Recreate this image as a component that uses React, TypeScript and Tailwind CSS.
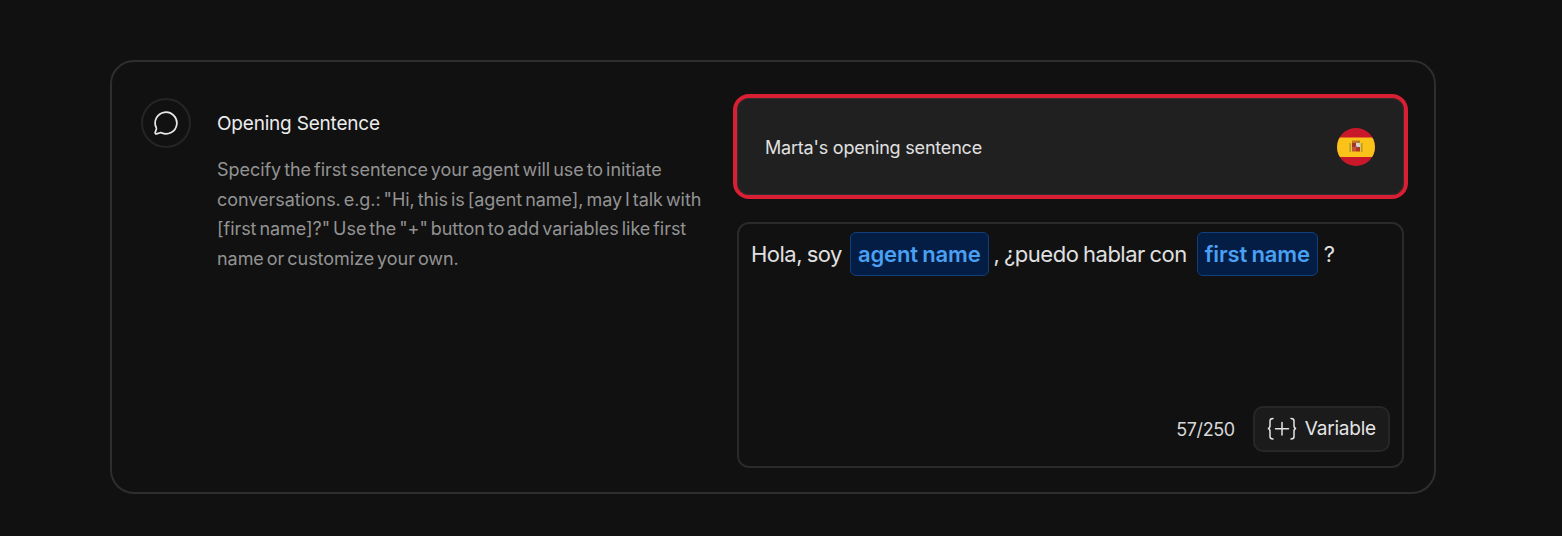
import { MessageCircle } from "lucide-react";

function VariableChip({ label, className }: { label: string; className: string }) {
  return (
    <span
      className={`inline-flex h-[44px] items-center rounded-[6px] border border-[#103f7c] bg-[#031d45] px-[7px] font-semibold tracking-[-0.15px] text-[#4aa0f2] ${className}`}
    >
      {label}
    </span>
  );
}

function SpainFlag() {
  return (
    <svg width="38" height="38" viewBox="0 0 38 38" className="shrink-0">
      <defs>
        <clipPath id="flag-circle">
          <circle cx="19" cy="19" r="19" />
        </clipPath>
      </defs>
      <g clipPath="url(#flag-circle)">
        <rect width="38" height="38" fill="#c8182a" />
        <rect y="9.500" width="38" height="19.500" fill="#fbc21a" />
        {/* crest */}
        <rect x="12.500" y="15" width="1.500" height="9" fill="#a89a4a" />
        <rect x="24" y="15" width="1.500" height="9" fill="#a89a4a" />
        <rect x="15" y="12.500" width="8" height="2.500" fill="#b8772a" />
        <rect x="15" y="15" width="4" height="4" fill="#a8341f" />
        <rect x="19" y="15" width="4" height="4" fill="#d9d2c5" />
        <rect x="15" y="19" width="4" height="4.500" fill="#c4552a" />
        <rect x="19" y="19" width="4" height="4.500" fill="#b3341f" />
        <circle cx="19" cy="19" r="1.100" fill="#7a6fa0" />
      </g>
    </svg>
  );
}

export default function App() {
  return (
    <div className="min-h-screen bg-[#111111] px-[110px] pt-[60px] font-['Inter',sans-serif] text-[#e8e8e8]">
      <div className="flex h-[434px] w-[1326px] items-start justify-between rounded-[24px] border-2 border-[#2e2e2e] pt-[36px] pr-[30px] pl-[29px]">
        <div className="flex w-[570px] gap-[26px]">
          <div className="flex h-[50px] w-[50px] shrink-0 items-center justify-center rounded-full border-2 border-[#252525]">
            <MessageCircle size={26} strokeWidth={1.6} className="text-[#e8e8e8]" />
          </div>
          <div className="pt-[13px]">
            <h2 className="text-[19px] leading-[26px] font-normal tracking-[-0.2px] text-[#ececec]">Opening Sentence</h2>
            <p className="mt-[18px] text-[18px] leading-[29.6px] tracking-[-0.05px] text-[#939393] [word-spacing:-2px]">
              Specify the first sentence your agent will use to initiate conversations. e.g.: "Hi, this is [agent name],
              may I talk with [first name]?" Use the "+" button to add variables like first name or customize your own.
            </p>
          </div>
        </div>
        <div className="flex w-[667px] flex-col gap-[27px]">
          <div className="flex h-[97px] items-center justify-between rounded-[12px] border border-[#2f2f2f] bg-[#202020] pt-[1px] pr-[28px] pl-[27px] outline-4 outline-[#d81f33]">
            <span className="text-[18px] tracking-[-0.2px] text-[#e0e0e0]">Marta's opening sentence</span>
            <SpainFlag />
          </div>
          <div className="flex h-[246px] flex-col justify-between rounded-[12px] border-2 border-[#2a2a2a] pt-[8px] pr-[12px] pb-[14px] pl-[12px]">
            <div className="flex items-center text-[22px] tracking-[-0.5px] text-[#e0e0e0] [word-spacing:-1px]">
              <span>Hola, soy</span>
              <VariableChip label="agent name" className="mr-[5px] ml-[8px]" />
              <span>, ¿puedo hablar con</span>
              <VariableChip label="first name" className="mr-[6px] ml-[10px]" />
              <span>?</span>
            </div>
            <div className="flex items-center justify-end gap-[18px]">
              <span className="text-[18px] tracking-[-0.4px] text-[#d8d8d8]">57/250</span>
              <button className="flex h-[46px] items-center gap-[8px] rounded-[10px] border-2 border-[#272727] bg-[#1b1b1b] px-[12px] text-[19px] tracking-[-0.2px] text-[#e4e4e4]">
                <svg width="30" height="24" viewBox="0 0 30 24" fill="none" stroke="currentColor" strokeWidth="1.5" strokeLinecap="round">
                  <path d="M6 1.500c-2 0-3 .8-3 2.500v4.500c0 1.800-.8 3-2.200 3 1.400 0 2.200 1.200 2.200 3v5c0 1.700 1 2.500 3 2.500" />
                  <path d="M24 1.500c2 0 3 .8 3 2.500v4.500c0 1.800.8 3 2.200 3-1.400 0-2.200 1.200-2.200 3v5c0 1.700-1 2.500-3 2.500" />
                  <path d="M15 5.500v12.500M8.500 11.800h13" />
                </svg>
                Variable
              </button>
            </div>
          </div>
        </div>
      </div>
    </div>
  );
}
